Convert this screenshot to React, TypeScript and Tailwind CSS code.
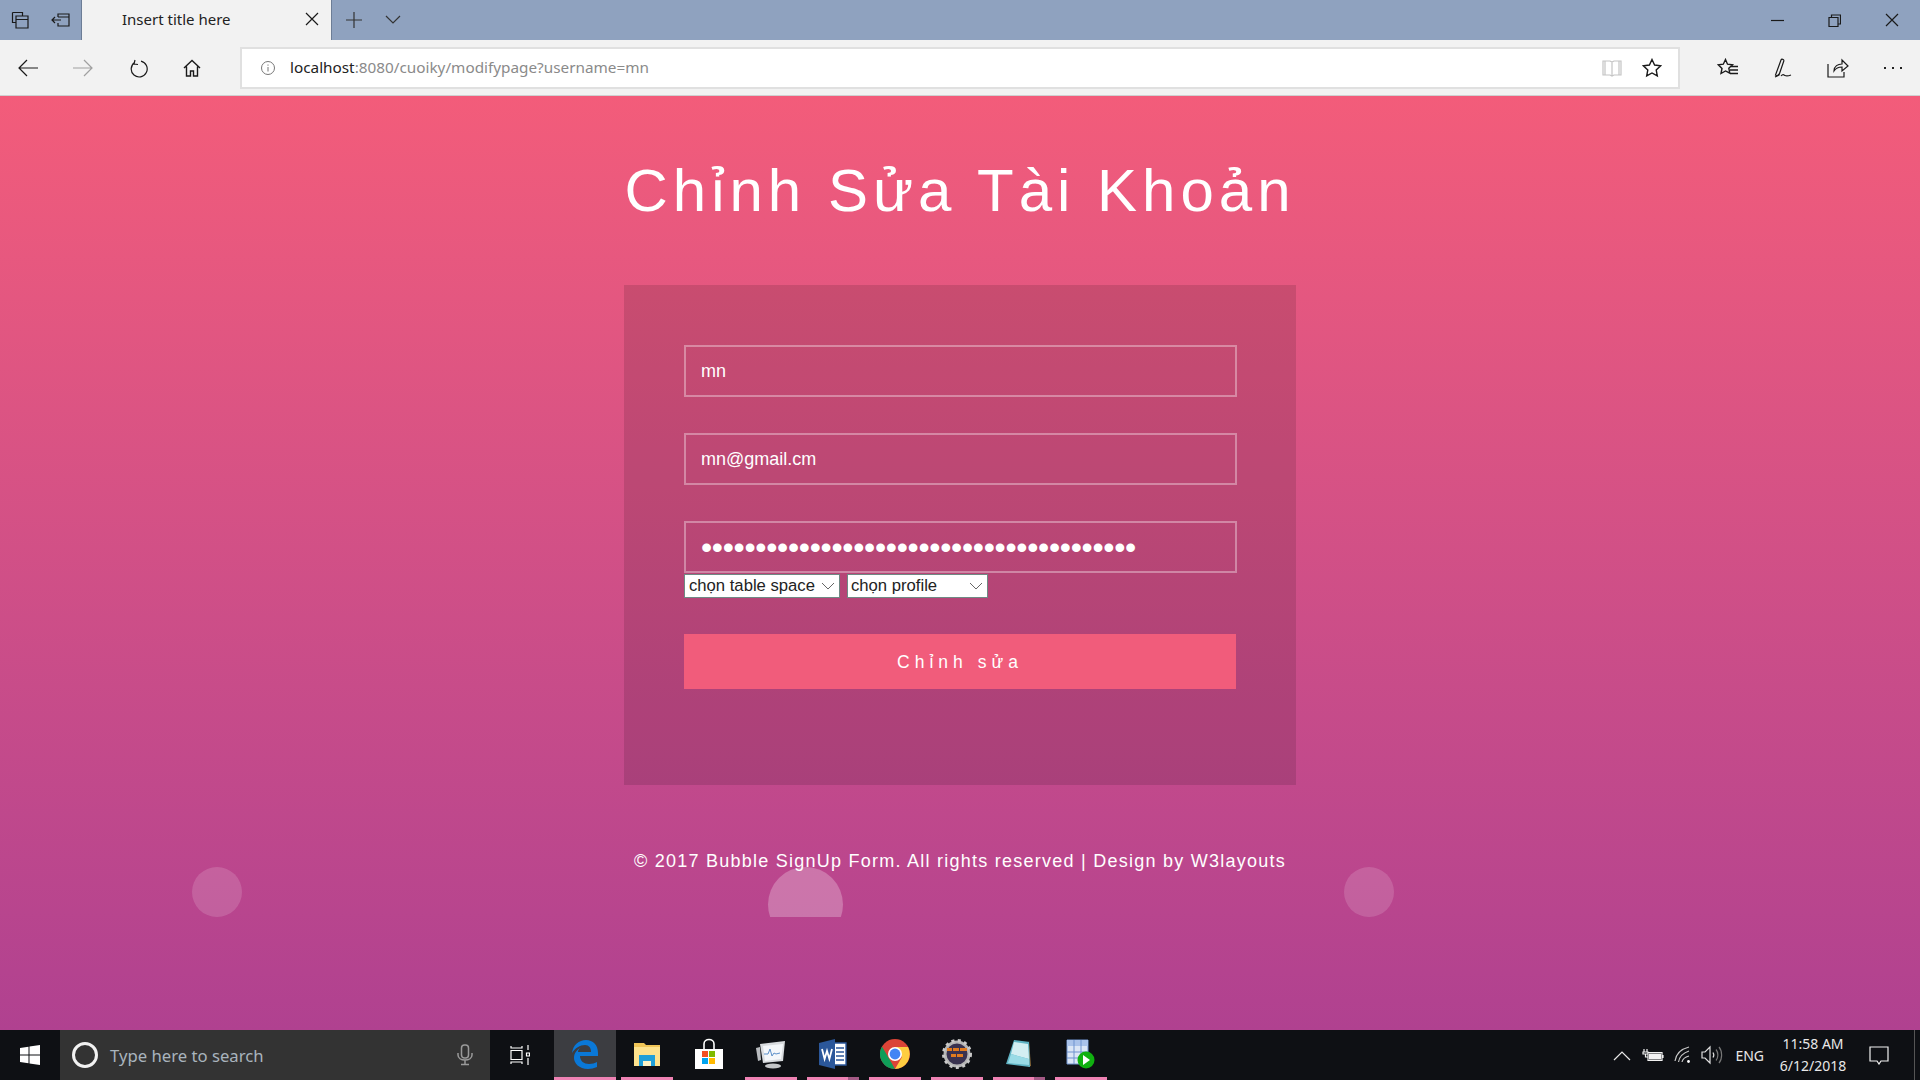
import React from "react";

const Stroke = ({ children, w = 20, h = 20, color = "#1a1a1a", sw = 1.2, vb }: any) => (
  <svg width={w} height={h} viewBox={vb || `0 0 ${w} ${h}`} fill="none" stroke={color} strokeWidth={sw}>
    {children}
  </svg>
);

const EdgeIcon = () => (
  <svg width="28" height="30" viewBox="0 0 28 30">
    <path fill="#0a78d7" d="M1 14C2 6 8 1 15 1c7 0 12 5 12 13v3H9c0 5 4 8 9 8 3 0 6-1 8-2v5c-3 1-6 2-9 2C8 30 3 24 3 19c0-5 3-8 7-11-2 2-3 3-3 5h13c0-4-2-7-6-7-5 0-10 3-13 8z" />
  </svg>
);

const FolderIcon = () => (
  <svg width="28" height="26" viewBox="0 0 28 26">
    <path fill="#f0c557" d="M1 2h10l2 2h14v20H1z" />
    <path fill="#fde28d" d="M1 6h26v19H1z" />
    <path fill="#1f9fd8" d="M6 14h16v11h-4v-5h-8v5H6z" />
    <path fill="#fff3c4" d="M10 20h8v5h-8z" />
  </svg>
);

const StoreIcon = () => (
  <svg width="30" height="32" viewBox="0 0 30 32">
    <path fill="none" stroke="#fff" strokeWidth="1.6" d="M10 11V6c0-6 10-6 10 0v5" />
    <path fill="#fff" d="M1 11h28v20H1z" />
    <path fill="#f25022" d="M8 13h6v6H8z" />
    <path fill="#7fba00" d="M15 13h6v6h-6z" />
    <path fill="#00a4ef" d="M8 20h6v6H8z" />
    <path fill="#ffb900" d="M15 20h6v6h-6z" />
  </svg>
);

const MonitorIcon = () => (
  <svg width="30" height="30" viewBox="0 0 30 30">
    <path fill="#b9bcc0" d="M0 9l4-1 1 13-3 1z" />
    <path fill="#d9dcdf" d="M4 5l25-3-2 20-20 2z" />
    <path fill="#f4f7fa" d="M7 7l20-2-2 15-16 2z" />
    <path fill="none" stroke="#5b8fc9" strokeWidth="1" d="M8 15l4 0 2-5 2 7 2-3 2 1 4-1" />
    <ellipse cx="17" cy="27" rx="8" ry="2.6" fill="#c4c6c8" />
  </svg>
);

const WordIcon = () => (
  <svg width="28" height="30" viewBox="0 0 28 30">
    <path fill="#fff" d="M13 4h14v22H13z" stroke="#2b579a" strokeWidth="1.4" />
    <path stroke="#2b579a" strokeWidth="1.4" d="M17 9h8M17 13h8M17 17h8M17 21h8" />
    <path fill="#2b579a" d="M0 4l16-4v30L0 26z" />
    <path fill="none" stroke="#fff" strokeWidth="1.8" d="M3 10l2.600 10L8 12l2.400 8L13 10" />
  </svg>
);

const ChromeIcon = () => (
  <svg width="30" height="30" viewBox="0 0 30 30">
    <circle cx="15" cy="15" r="15" fill="#db4437" />
    <path fill="#0f9d58" d="M2 7.500L9 19.500 15 30A15 15 0 0 1 2 7.500z" />
    <path fill="#ffcd40" d="M15 8h13a15 15 0 0 1-13 22l7-12z" />
    <circle cx="15" cy="15" r="7" fill="#fff" />
    <circle cx="15" cy="15" r="5.400" fill="#4285f4" />
  </svg>
);

const EclipseIcon = () => (
  <svg width="30" height="30" viewBox="0 0 30 30">
    <circle cx="15" cy="15" r="12" fill="#39324f" stroke="#b5b5b5" strokeWidth="3" />
    <circle cx="15" cy="15" r="13.500" fill="none" stroke="#c9c9c9" strokeWidth="3" strokeDasharray="3 3.400" />
    <path fill="#e07b1e" d="M5 9h20v3H5zM9 15h12v3H9z" />
    <path fill="#39324f" d="M10 9h1v3h-1zM17 9h1v3h-1zM14 15h1v3h-1z" />
  </svg>
);

const NotepadIcon = () => (
  <svg width="28" height="30" viewBox="0 0 28 30">
    <path fill="#8a6a3a" d="M24 2l2 25-3 1z" />
    <path fill="#5fb3c4" d="M9 1l16 2-1 0 1 25L1 25z" />
    <path fill="#d3eef2" d="M9 3l14 2 1 15L6 15z" />
    <path fill="#9adbe6" d="M6 15l18 5 0 6L3 24z" />
  </svg>
);

const SqlIcon = () => (
  <svg width="30" height="30" viewBox="0 0 30 30">
    <path fill="#dbe6f6" stroke="#6f93cf" strokeWidth="1" d="M1 1h21v24H1z" />
    <path fill="#a9c2ea" d="M1 1h21v6H1z" />
    <path stroke="#6f93cf" strokeWidth="1" d="M1 13h21M1 19h21M8 1v24M15 1v24" />
    <circle cx="20" cy="21" r="8.500" fill="#10b010" />
    <path fill="#fff" d="M17 16l7 5-7 5z" />
  </svg>
);

const items = [
  { icon: <EdgeIcon />, bar: true, active: true },
  { icon: <FolderIcon />, bar: true },
  { icon: <StoreIcon />, bar: false },
  { icon: <MonitorIcon />, bar: true },
  { icon: <WordIcon />, bar: true, stack: true },
  { icon: <ChromeIcon />, bar: true },
  { icon: <EclipseIcon />, bar: true },
  { icon: <NotepadIcon />, bar: true, stack: true },
  { icon: <SqlIcon />, bar: true },
];

function Browser() {
  return (
    <div className="shrink-0" style={{ fontFamily: '"Noto Sans", "Open Sans", sans-serif' }}>
      <div className="flex h-10 bg-[#8fa2bf]">
        <div className="flex w-[81px] items-center pl-[11px] gap-[22px]">
          <Stroke w={18} h={20}>
            <path d="M1.500 2.500h10v3M1.500 2.500v10h3M5 6h12v12H5zM5 9.500h12" />
          </Stroke>
          <Stroke w={20} h={16}>
            <path d="M7 5V2h11v12H7v-3M7 5h11M1 8h9M4 5L1 8l3 3" />
          </Stroke>
        </div>
        <div className="flex w-[251px] items-center justify-between bg-[#f2f2f2] border-x border-[#6c7d96] pl-[40px] pr-[12px] pb-[2px] text-[15px] text-[#222]">
          <span>Insert title here</span>
          <Stroke w={14} h={14}>
            <path d="M1 1l12 12M13 1L1 13" />
          </Stroke>
        </div>
        <div className="flex items-center pl-[13px] gap-[22px]">
          <Stroke w={18} h={18} color="#333">
            <path d="M9 1v16M1 9h16" />
          </Stroke>
          <Stroke w={16} h={10} color="#333">
            <path d="M1 1l7 7 7-7" />
          </Stroke>
        </div>
        <div className="ml-auto flex items-center">
          <div className="flex w-[57px] justify-center">
            <Stroke w={13} h={3}>
              <path d="M0 1.500h13" />
            </Stroke>
          </div>
          <div className="flex w-[57px] justify-center">
            <Stroke w={13} h={13}>
              <path d="M1 3.500h9v9H1zM3.500 3V1h9v9h-2" />
            </Stroke>
          </div>
          <div className="flex w-[57px] justify-center">
            <Stroke w={14} h={14}>
              <path d="M1 1l12 12M13 1L1 13" />
            </Stroke>
          </div>
        </div>
      </div>
      <div className="flex h-[56px] items-center bg-[#f2f2f2] border-b border-[#d0d0d0]">
        <div className="flex w-[240px] items-center pl-[18px] gap-[35px]">
          <Stroke w={20} h={18}>
            <path d="M20 9H1M9 1L1 9l8 8" />
          </Stroke>
          <Stroke w={20} h={18} color="#a0a0a0">
            <path d="M0 9h19M11 1l8 8-8 8" />
          </Stroke>
          <Stroke w={20} h={20}>
            <path d="M7 2L6 6l4 .5M6.500 4.500A8 8 0 1 0 13 3.200" />
          </Stroke>
          <Stroke w={18} h={18} sw={1.4}>
            <path d="M1 9l8-7.500L17 9M3.500 7.500V17h4v-5h3v5h4V7.500" />
          </Stroke>
        </div>
        <div className="flex h-[42px] w-[1440px] items-center border-2 border-[#e0e0e0] bg-white pl-[18px] pr-[16px]">
          <svg width="16" height="16" viewBox="0 0 16 16" fill="none" stroke="#777" strokeWidth="1">
            <circle cx="8" cy="8" r="6.500" />
            <path d="M8 7v4.500M8 4.500v1.200" />
          </svg>
          <span className="ml-[14px] text-[15.3px] text-[#222]">
            localhost<span className="text-[#8a8a8a]">:8080/cuoiky/modifypage?username=mn</span>
          </span>
          <div className="ml-auto flex items-center gap-[20px]">
            <Stroke w={20} h={18} color="#c4c4c4">
              <path d="M1 2h7l2 1 2-1h7v14h-7l-2 1-2-1H1zM10 3v14M3 2v14M17 2v14" />
            </Stroke>
            <Stroke w={20} h={20} sw={1.4}>
              <path d="M10 1.500l2.600 5.500 6 .8-4.400 4.100 1.100 6L10 15l-5.300 2.900 1.100-6L1.400 7.800l6-.8z" />
            </Stroke>
          </div>
        </div>
        <div className="flex flex-1 items-center pl-[20px]">
          <div className="flex w-[55px] justify-center">
            <Stroke w={22} h={20} sw={1.4}>
              <path d="M8.500 1.500l2 4.700 5 .6-3.700 3.400 1 5L8.500 13 4 15.500l1-5L1.300 6.800l5-.6zM14 8.500h7M13 12h8M13 15.500h8" />
            </Stroke>
          </div>
          <div className="flex w-[55px] justify-center">
            <Stroke w={22} h={22}>
              <path d="M5 19L3.500 18 9 3c.6-1.500 3.200-.5 2.800 1L7 18zM3 20c3-1 2-1 4-3M9 19c2-2.500 3-1 4-.5s3 .6 6-.5" />
            </Stroke>
          </div>
          <div className="flex w-[55px] justify-center">
            <Stroke w={22} h={20}>
              <path d="M1 6v13h16v-5M7 13c0-5 4-7 8-7V2l6 6-6 5V9c-4 0-6 1-8 4z" />
            </Stroke>
          </div>
          <div className="flex w-[55px] justify-center gap-[6px]">
            <span className="h-[2px] w-[2px] bg-[#222]" />
            <span className="h-[2px] w-[2px] bg-[#222]" />
            <span className="h-[2px] w-[2px] bg-[#222]" />
          </div>
        </div>
      </div>
    </div>
  );
}

function Taskbar() {
  return (
    <div className="flex h-[50px] shrink-0 bg-[#0e1014]" style={{ fontFamily: '"Noto Sans", "Open Sans", sans-serif' }}>
      <div className="flex w-[60px] items-center justify-center">
        <svg width="20" height="20" viewBox="0 0 20 20" fill="#fff">
          <path d="M0 3l8.500-1.200V9.500H0zM9.500 1.600L20 0v9.500H9.500zM0 10.500h8.500v7.700L0 17zM9.500 10.500H20V20L9.500 18.400z" />
        </svg>
      </div>
      <div className="flex w-[430px] items-center bg-[#333333] pl-[12px] pr-[17px]">
        <span className="h-[26px] w-[26px] rounded-full border-[3px] border-[#f2f2f2]" />
        <span className="ml-[12px] mt-px text-[16.7px] text-[#a9b4bd]">Type here to search</span>
        <svg className="ml-auto" width="16" height="22" viewBox="0 0 16 22" fill="none" stroke="#9a9a9a" strokeWidth="1.500">
          <rect x="4.500" y="1" width="7" height="13" rx="3" />
          <path d="M1 9v2c0 3 3 5 7 5s7-2 7-5V9M8 16v4M4 20.500h8" />
        </svg>
      </div>
      <div className="flex w-[64px] items-center justify-center pr-[4px]">
        <svg width="20" height="20" viewBox="0 0 20 20" fill="none" stroke="#fff" strokeWidth="1.200">
          <path d="M1 1v2h11V1M1 5.500h11v9H1zM1 19v-2h11v2M18 0v5M18 13v7M16.500 8h3v3h-3z" />
        </svg>
      </div>
      <div className="flex">
        {items.map((it, i) => (
          <div key={i} className={`flex w-[62px] flex-col items-stretch ${it.active ? "bg-[#3c3d41]" : ""}`}>
            <div className="flex flex-1 items-center justify-center">{it.icon}</div>
            <div className={`flex h-[3px] ${it.active ? "" : "mx-[5px]"}`}>
              {it.bar && <div className="flex-1 bg-[#ee82b4]" />}
              {it.stack && <div className="w-[11px] bg-[#a45a86]" />}
            </div>
          </div>
        ))}
      </div>
      <div className="ml-auto flex items-center text-[14px] text-[#e8e8e8]">
        <svg width="18" height="11" viewBox="0 0 18 11" fill="none" stroke="#e8e8e8" strokeWidth="1.200">
          <path d="M1 10l8-8 8 8" />
        </svg>
        <svg className="ml-[11px]" width="22" height="14" viewBox="0 0 22 14" fill="none" stroke="#f2f2f2" strokeWidth="1.200">
          <path d="M6 4.500h14v8H6zM21 7v3M2 1v3M5 1v3M1 4h5v2H1zM3.500 6v3H6" />
          <path fill="#f2f2f2" stroke="none" d="M7 5.500h12v6H7z" />
        </svg>
        <svg className="ml-[10px]" width="18" height="18" viewBox="0 0 18 18" fill="none" stroke="#c8c8c8" strokeWidth="1.200">
          <path d="M1 15C2 8 7 3 15 1M4.500 16C5.500 10 9 7 15 5M8 16c.6-3 3-5 7-6" />
          <circle cx="14.500" cy="15.500" r="1.400" fill="#fff" stroke="none" />
        </svg>
        <svg className="ml-[9px]" width="22" height="20" viewBox="0 0 22 20" fill="none" stroke="#e0e0e0" strokeWidth="1.200">
          <path d="M1 7h3l5-5v16l-5-5H1zM12 7.500c1 1.500 1 3.500 0 5" />
          <path stroke="#777" d="M15 4.500c2.500 3 2.500 8 0 11M18 2c3.500 4 3.500 12 0 16" />
        </svg>
        <span className="ml-[12px]">ENG</span>
        <div className="ml-[16px] flex w-[66px] flex-col items-center text-[14px] leading-[22px]">
          <span>11:58 AM</span>
          <span className="whitespace-nowrap">6/12/2018</span>
        </div>
        <svg className="ml-[23px]" width="20" height="19" viewBox="0 0 20 19" fill="none" stroke="#f2f2f2" strokeWidth="1.200">
          <path d="M1 1h18v14h-7l-2 3-2-3H1z" />
        </svg>
        <div className="ml-[25px] h-full w-[6px] border-l border-[#555]" />
      </div>
    </div>
  );
}

const inputCls =
  "block h-[52px] w-[553px] border-2 border-[#ffffff59] bg-transparent px-[15px] text-[18px] text-white outline-none";

export default function App() {
  return (
    <div className="flex h-[1080px] w-[1920px] flex-col overflow-hidden">
      <Browser />
      <main
        className="relative flex flex-1 flex-col items-center overflow-hidden bg-gradient-to-b from-[#f35c7a] to-[#b04190] text-white"
        style={{ fontFamily: '"Liberation Sans", Arial, sans-serif' }}
      >
        <h1 className="mt-[57px] text-[60px] leading-[76px] tracking-[5px] font-normal">Chỉnh Sửa Tài Khoản</h1>
        <form className="mt-[56px] h-[500px] w-[672px] bg-[#0000001f] p-[60px]">
          <input className={inputCls} defaultValue="mn" readOnly />
          <input className={`${inputCls} mt-[36px]`} defaultValue="mn@gmail.cm" readOnly />
          <input
            className="mt-[36px] block h-[52px] w-[553px] border-2 border-[#ffffff59] bg-transparent px-[15px] text-[32px] tracking-[-0.33px] text-white outline-none"
            type="password"
            defaultValue="1234567890123456789012345678901234567890"
            readOnly
          />
          <div className="mt-px flex h-[24px] gap-[7px] text-[16.67px] text-[#222]">
            <div className="flex h-[24px] w-[156px] items-center justify-between border border-[#6f8a84] bg-white pl-[4px] pr-[4px] pb-[2px]">
              <span>chọn table space</span>
              <svg className="mt-[2px]" width="14" height="8" viewBox="0 0 14 8" fill="none" stroke="#666" strokeWidth="1">
                <path d="M1 1l6 6 6-6" />
              </svg>
            </div>
            <div className="flex h-[24px] w-[141px] items-center justify-between border border-[#6f8a84] bg-white pl-[3px] pr-[4px] pb-[2px]">
              <span>chọn profile</span>
              <svg className="mt-[2px]" width="14" height="8" viewBox="0 0 14 8" fill="none" stroke="#666" strokeWidth="1">
                <path d="M1 1l6 6 6-6" />
              </svg>
            </div>
          </div>
          <button type="button" className="mt-[36px] block h-[55px] w-[552px] bg-[#f15c7b] pt-[2px] text-[17.5px] tracking-[5px] text-white">
            Chỉnh sửa
          </button>
        </form>
        <p className="mt-[65px] text-[18px] leading-[22px] tracking-[1.25px]">© 2017 Bubble SignUp Form. All rights reserved | Design by W3layouts</p>
        <div className="absolute left-0 top-[771px] h-[50px] w-full overflow-hidden">
          <span className="absolute left-[192px] top-0 h-[50px] w-[50px] rounded-full bg-[#ffffff26]" />
          <span className="absolute left-[768px] top-0 h-[75px] w-[75px] rounded-full bg-[#ffffff42]" />
          <span className="absolute left-[1344px] top-0 h-[50px] w-[50px] rounded-full bg-[#ffffff26]" />
        </div>
      </main>
      <Taskbar />
    </div>
  );
}
